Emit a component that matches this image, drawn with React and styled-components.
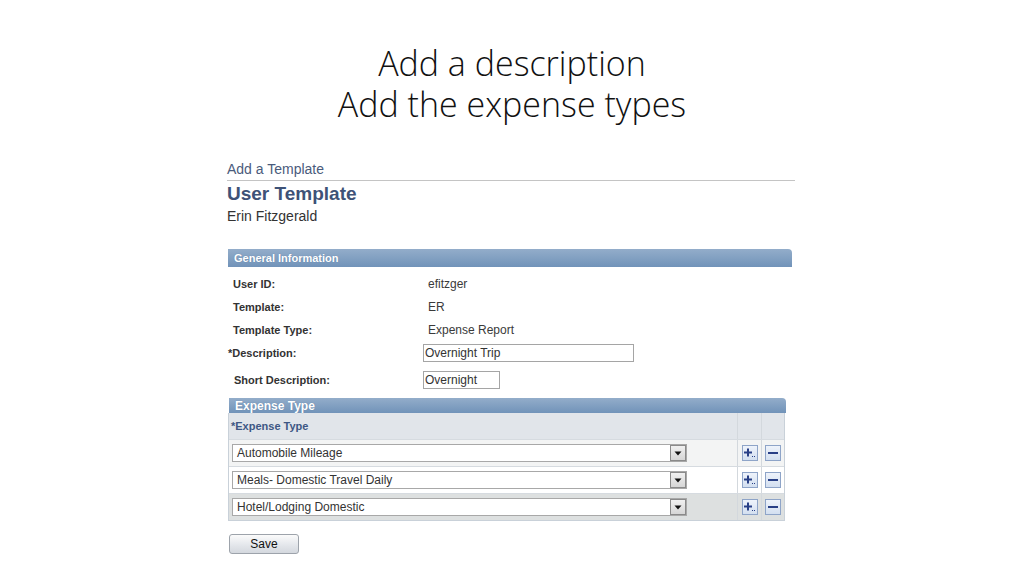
import React from "react";
import styled, { createGlobalStyle } from "styled-components";

const Global = createGlobalStyle`
  html, body { margin: 0; padding: 0; background: #ffffff; }
  #root { width: 1024px; height: 576px; overflow: hidden; }
`;

const Page = styled.div`
  width: 1024px;
  height: 576px;
  background: #fff;
  display: flex;
  flex-direction: column;
`;

const Title = styled.h1`
  margin: 43px 0 0;
  display: flex;
  flex-direction: column;
  align-items: center;
  font-family: "Open Sans", "Liberation Sans", sans-serif;
  font-weight: 300;
  font-size: 34px;
  color: #111;
`;

const TitleLine = styled.span`
  display: block;
  height: 41px;
  line-height: 41px;
`;

const Form = styled.div`
  margin: 36px 0 0 227px;
  width: 568px;
  font-family: Arial, "Liberation Sans", sans-serif;
  color: #333;
`;

const Breadcrumb = styled.div`
  font-size: 14px;
  line-height: 16px;
  color: #4a5b7c;
  padding-bottom: 3px;
  border-bottom: 1px solid #c4c4c4;
`;

const PageTitle = styled.div`
  margin-top: 2px;
  font-size: 19px;
  line-height: 22px;
  font-weight: bold;
  color: #3e5277;
`;

const UserName = styled.div`
  margin-top: 3px;
  font-size: 14px;
  line-height: 16px;
  color: #333;
`;

const Bar = styled.div`
  margin: ${(p) => p.$mt || 0}px 0 0 1px;
  width: ${(p) => p.$w}px;
  height: ${(p) => p.$h}px;
  box-sizing: border-box;
  padding-left: 6px;
  display: flex;
  align-items: center;
  background: linear-gradient(#93adca, #7193b9);
  border-top-right-radius: 4px;
  color: #fff;
  font-weight: bold;
  font-size: ${(p) => p.$fs || 11}px;
  text-shadow: 0 0 1px #5a7aa0;
`;

const Fields = styled.div`
  margin-top: 5px;
  display: flex;
  flex-direction: column;
`;

const Row = styled.div`
  display: grid;
  grid-template-columns: 196px 1fr;
  align-items: center;
  height: ${(p) => p.$h}px;
`;

const Label = styled.div`
  font-size: 11px;
  font-weight: bold;
  color: #333;
  padding-left: ${(p) => p.$pl}px;
`;

const Value = styled.div`
  font-size: 12px;
  color: #3a3a3a;
  padding-left: 5px;
`;

const TextInput = styled.div`
  width: ${(p) => p.$w}px;
  height: 18px;
  box-sizing: border-box;
  border: 1px solid #a5a5a5;
  background: #fff;
  font-size: 12px;
  line-height: 16px;
  padding-left: 1px;
  color: #333;
`;

const Grid = styled.div`
  margin: 3px 0 0 1px;
  width: 557px;
`;

const GridBody = styled.div`
  border: 1px solid #c9d1d9;
  border-top: none;
`;

const GridRow = styled.div`
  display: grid;
  grid-template-columns: 508px 24px 1fr;
  height: ${(p) => p.$h}px;
  background: ${(p) => p.$bg};
  border-top: ${(p) => (p.$line ? "1px solid #d6dbe0" : "none")};
`;

const Cell = styled.div`
  display: flex;
  align-items: center;
  justify-content: ${(p) => (p.$center ? "center" : "flex-start")};
  border-left: ${(p) => (p.$divider ? "1px solid #d3d8dd" : "none")};
  padding-left: ${(p) => p.$pl || 0}px;
`;

const ColHead = styled.div`
  font-size: 11px;
  font-weight: bold;
  color: #3d5784;
`;

const Select = styled.div`
  width: 455px;
  height: 18px;
  box-sizing: border-box;
  border: 1px solid #a8a8a8;
  background: #fff;
  display: flex;
  align-items: center;
  justify-content: space-between;
  font-size: 12px;
  color: #333;
  padding-left: 4px;
`;

const Arrow = styled.div`
  width: 16px;
  height: 16px;
  box-sizing: border-box;
  border: 1px solid #8a8a8a;
  background: linear-gradient(#f0f0f0, #d6d6d6);
  display: flex;
  align-items: center;
  justify-content: center;
`;

const IconBtn = styled.div`
  width: 16px;
  height: 16px;
  box-sizing: border-box;
  border: 1px solid #8ea4c8;
  background: linear-gradient(#eef3fb, #d3dff0);
  display: flex;
  align-items: center;
  justify-content: center;
`;

const SaveButton = styled.div`
  margin: 13px 0 0 2px;
  width: 70px;
  height: 20px;
  box-sizing: border-box;
  border: 1px solid #9da3ab;
  border-radius: 3px;
  background: linear-gradient(#fbfbfb, #e2e5ea 60%, #d4d8de);
  font-size: 12px;
  color: #111;
  display: flex;
  align-items: center;
  justify-content: center;
`;

const PlusIcon = () => (
  <svg width="14" height="14" viewBox="0 0 14 14">
    <path d="M5 2.5v8M1 6.5h8" stroke="#283f86" strokeWidth="2" />
    <rect x="9" y="10" width="1" height="1" fill="#283f86" />
    <rect x="11" y="10" width="1" height="1" fill="#283f86" />
  </svg>
);

const MinusIcon = () => (
  <svg width="14" height="14" viewBox="0 0 14 14">
    <path d="M2 7h10" stroke="#283f86" strokeWidth="2" />
  </svg>
);

const ArrowIcon = () => (
  <svg width="8" height="5" viewBox="0 0 8 5">
    <path d="M0.5 0.5h7L4 4.5z" fill="#111" />
  </svg>
);

const fields = [
  { label: "User ID:", value: "efitzger", h: 23, pl: 6 },
  { label: "Template:", value: "ER", h: 23, pl: 6 },
  { label: "Template Type:", value: "Expense Report", h: 23, pl: 6 },
  { label: "*Description:", input: "Overnight Trip", w: 211, h: 23, pl: 1 },
  { label: "Short Description:", input: "Overnight", w: 77, h: 31, pl: 7 },
];

const expenses = [
  { name: "Automobile Mileage", bg: "#f3f4f4" },
  { name: "Meals- Domestic Travel Daily", bg: "#ffffff" },
  { name: "Hotel/Lodging Domestic", bg: "#dde0e0" },
];

export default function App() {
  return (
    <Page>
      <Global />
      <Title>
        <TitleLine>Add a description</TitleLine>
        <TitleLine>Add the expense types</TitleLine>
      </Title>
      <Form>
        <Breadcrumb>Add a Template</Breadcrumb>
        <PageTitle>User Template</PageTitle>
        <UserName>Erin Fitzgerald</UserName>
        <Bar $mt={25} $w={564} $h={18}>General Information</Bar>
        <Fields>
          {fields.map((f) => (
            <Row key={f.label} $h={f.h}>
              <Label $pl={f.pl}>{f.label}</Label>
              {f.input ? (
                <TextInput $w={f.w}>{f.input}</TextInput>
              ) : (
                <Value>{f.value}</Value>
              )}
            </Row>
          ))}
        </Fields>
        <Grid>
          <Bar $w={557} $h={15} $fs={12}>Expense Type</Bar>
          <GridBody>
            <GridRow $h={26} $bg="#e1e5ea">
              <Cell $pl={2}>
                <ColHead>*Expense Type</ColHead>
              </Cell>
              <Cell $divider />
              <Cell $divider />
            </GridRow>
            {expenses.map((e) => (
              <GridRow key={e.name} $h={26} $bg={e.bg} $line>
                <Cell $pl={3}>
                  <Select>
                    {e.name}
                    <Arrow>
                      <ArrowIcon />
                    </Arrow>
                  </Select>
                </Cell>
                <Cell $divider $center>
                  <IconBtn>
                    <PlusIcon />
                  </IconBtn>
                </Cell>
                <Cell $divider $center>
                  <IconBtn>
                    <MinusIcon />
                  </IconBtn>
                </Cell>
              </GridRow>
            ))}
          </GridBody>
        </Grid>
        <SaveButton>Save</SaveButton>
      </Form>
    </Page>
  );
}
